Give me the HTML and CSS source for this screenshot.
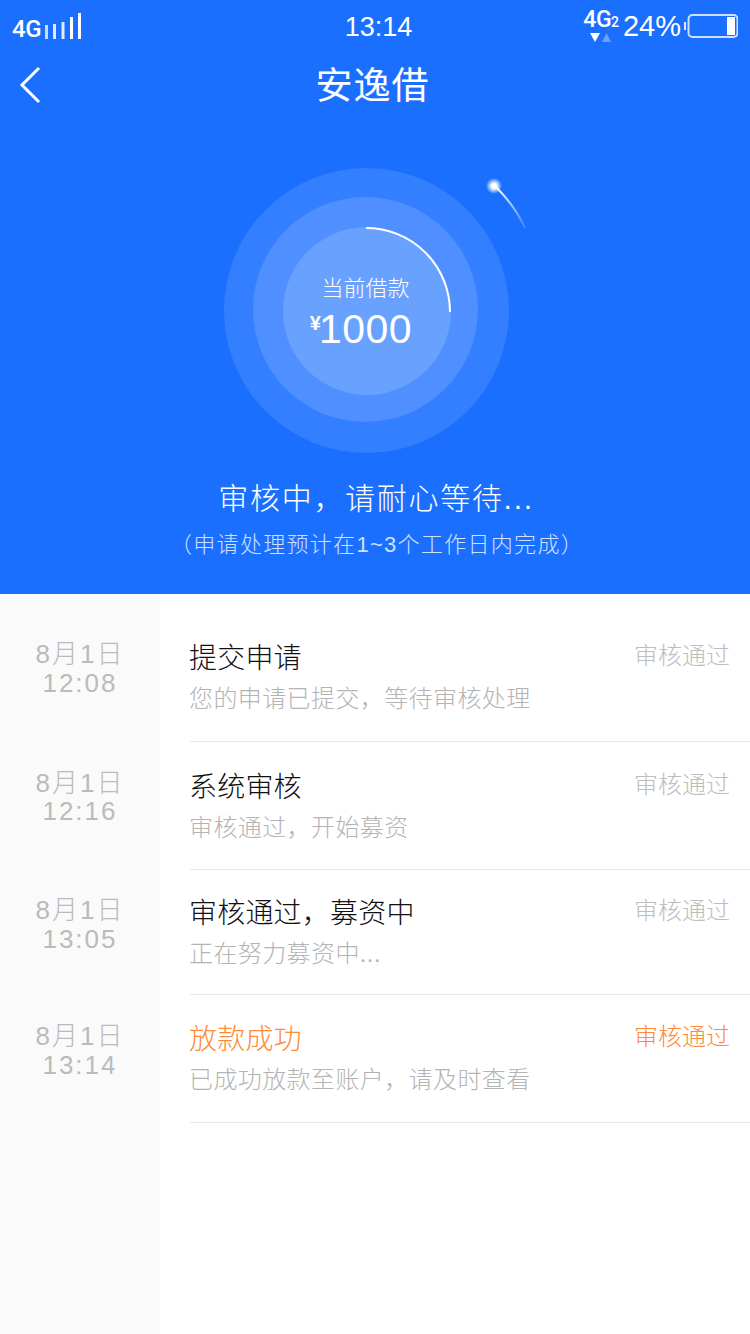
FILE: index.html
```html
<!DOCTYPE html>
<html lang="zh-CN">
<head>
    <meta charset="UTF-8">
    <meta name="viewport" content="width=device-width, initial-scale=1.0">
    <title>安逸借</title>
    <link rel="stylesheet" href="styles.css">
</head>
<body>
    <div class="header">
        <div class="status-bar">
            <div class="status-left">
                <span class="net-label">4G</span>
                <svg class="signal" width="38" height="26" viewBox="0 0 38 26">
                    <rect x="1" y="12" width="3" height="14" fill="#c9dcff"/>
                    <rect x="9" y="11" width="3" height="15" fill="#dfe9ff"/>
                    <rect x="17.5" y="9" width="3" height="17" fill="#dfe9ff"/>
                    <rect x="26" y="4" width="3" height="22" fill="#fff"/>
                    <rect x="34" y="0" width="3" height="26" fill="#fff"/>
                </svg>
            </div>
            <div class="status-time">13:14</div>
            <div class="status-right">
                <div class="sim">
                    <span class="sim-label">4G<small>2</small></span>
                    <svg width="22" height="9" viewBox="0 0 22 9">
                        <polygon points="0,0 10,0 5,9" fill="#fff"/>
                        <polygon points="12,9 21,9 16.5,0" fill="#6fa0ff"/>
                    </svg>
                </div>
                <span class="battery-text">24%</span>
                <svg class="battery" width="54" height="24" viewBox="0 0 54 24">
                    <rect x="0" y="8" width="2" height="8" fill="#dfe9ff"/>
                    <rect x="4.5" y="1" width="49" height="22" rx="4" fill="none" stroke="#cfe0ff" stroke-width="2"/>
                    <rect x="43" y="3" width="8" height="18" fill="#fff"/>
                </svg>
            </div>
        </div>

        <div class="nav">
            <svg class="back" width="24" height="40" viewBox="0 0 24 40">
                <polyline points="21,2 4,19 21,36" fill="none" stroke="#fff" stroke-width="3"/>
            </svg>
            <h1>安逸借</h1>
        </div>

        <div class="rings">
            <div class="ring ring-outer">
                <div class="ring ring-mid">
                    <div class="ring ring-inner">
                        <div class="amount-label">当前借款</div>
                        <div class="amount"><span class="yen">¥</span>1000</div>
                    </div>
                </div>
                <!-- progress arc and the little comet sit over the rings -->
                <svg class="arc" width="320" height="300" viewBox="0 0 320 300">
                    <defs>
                        <linearGradient id="tail" x1="0" y1="0" x2="1" y2="1">
                            <stop offset="0" stop-color="#fff"/>
                            <stop offset="1" stop-color="#fff" stop-opacity="0.15"/>
                        </linearGradient>
                        <radialGradient id="glow">
                            <stop offset="0.3" stop-color="#fff"/>
                            <stop offset="1" stop-color="#fff" stop-opacity="0"/>
                        </radialGradient>
                    </defs>
                    <path d="M146 68 A84 84 0 0 1 230 152" fill="none" stroke="#fff" stroke-width="2"/>
                    <path d="M276 27 Q295 46 305 68" fill="none" stroke="url(#tail)" stroke-width="2"/>
                    <circle cx="274" cy="26" r="8" fill="url(#glow)"/>
                </svg>
            </div>
        </div>

        <div class="state">审核中，请耐心等待...</div>
        <div class="state-note">（申请处理预计在1~3个工作日内完成）</div>
    </div>

    <div class="timeline">
        <div class="row row-1">
            <div class="row-time">8月1日<br>12:08</div>
            <div class="row-body">
                <div class="row-text">
                    <div class="row-title">提交申请</div>
                    <div class="row-desc">您的申请已提交，等待审核处理</div>
                </div>
                <div class="row-state">审核通过</div>
            </div>
        </div>
        <div class="row row-2">
            <div class="row-time">8月1日<br>12:16</div>
            <div class="row-body">
                <div class="row-text">
                    <div class="row-title">系统审核</div>
                    <div class="row-desc">审核通过，开始募资</div>
                </div>
                <div class="row-state">审核通过</div>
            </div>
        </div>
        <div class="row row-3">
            <div class="row-time">8月1日<br>13:05</div>
            <div class="row-body">
                <div class="row-text">
                    <div class="row-title">审核通过，募资中</div>
                    <div class="row-desc">正在努力募资中...</div>
                </div>
                <div class="row-state">审核通过</div>
            </div>
        </div>
        <div class="row row-4 done">
            <div class="row-time">8月1日<br>13:14</div>
            <div class="row-body">
                <div class="row-text">
                    <div class="row-title">放款成功</div>
                    <div class="row-desc">已成功放款至账户，请及时查看</div>
                </div>
                <div class="row-state">审核通过</div>
            </div>
        </div>
        <div class="rest"></div>
    </div>
</body>
</html>
```

FILE: styles.css
```css
* {
    box-sizing: border-box;
}

html, body {
    height: 100%;
}

body {
    margin: 0;
    height: 1334px;
    overflow: hidden;
    display: flex;
    flex-direction: column;
    font-family: "Liberation Sans", "Noto Sans CJK SC", sans-serif;
    background-color: #fff;
}

.header {
    height: 594px;
    flex: none;
    background-color: #1b6fff;
    color: #fff;
    text-align: center;
}

.status-bar {
    height: 52px;
    padding: 13px 12px 0 12px;
    display: flex;
    justify-content: space-between;
    align-items: flex-start;
}

.status-left {
    width: 180px;
    display: flex;
    align-items: flex-end;
    gap: 3px;
}

.net-label {
    width: 29px;
    font-family: Roboto, sans-serif;
    font-size: 24px;
    line-height: 26px;
    font-weight: 500;
    letter-spacing: -0.5px;
    text-align: left;
    position: relative;
    top: 3px;
}

.status-time {
    font-size: 27px;
    line-height: 30px;
    margin-left: 7px;
    margin-top: -1px;
}

.status-right {
    width: 180px;
    margin-top: -4px;
    display: flex;
    justify-content: flex-end;
    align-items: flex-start;
}

.sim {
    width: 38px;
    display: flex;
    flex-direction: column;
    align-items: center;
}

.sim-label {
    font-family: Roboto, sans-serif;
    font-size: 23px;
    line-height: 21px;
    font-weight: 500;
    letter-spacing: -0.5px;
}

.sim-label small {
    font-size: 14px;
}

.battery-text {
    font-size: 29px;
    line-height: 34px;
    margin: 0 3px 0 3px;
}

.battery {
    margin-top: 5px;
}

.nav {
    height: 64px;
    display: flex;
    align-items: center;
    justify-content: center;
    position: relative;
}

.nav h1 {
    margin: -2px 5px 0 0;
    font-size: 37px;
    font-weight: normal;
    letter-spacing: 1px;
}

.back {
    position: absolute;
    left: 18px;
    top: 14px;
}

.rings {
    padding: 52px 0 0 224px;
    display: flex;
}

.ring {
    border-radius: 50%;
    display: flex;
    flex-direction: column;
    align-items: center;
    justify-content: center;
}

.ring-outer {
    width: 285px;
    height: 285px;
    background-color: #337fff;
    position: relative;
}

.ring-mid {
    width: 225px;
    height: 225px;
    margin: -2px 0 0 -2px;
    background-color: #4f8fff;
}

.ring-inner {
    width: 168px;
    height: 168px;
    margin: 3px 0 0 3px;
    padding-top: 18px;
    background-color: #69a1ff;
}

.arc {
    position: absolute;
    left: -4px;
    top: -8px;
}

.amount-label {
    font-size: 22px;
    font-weight: 300;
    line-height: 30px;
    margin: -5px 3px 0 0;
}

.amount {
    font-size: 41px;
    line-height: 50px;
    letter-spacing: 0.5px;
    margin-left: -12px;
    position: relative;
}

.yen {
    font-size: 20px;
    font-weight: bold;
    position: relative;
    top: -13px;
    letter-spacing: -2px;
}

.state {
    margin-top: 26px;
    margin-left: 2px;
    font-size: 30px;
    font-weight: 300;
    line-height: 40px;
    letter-spacing: 1.7px;
}

.state-note {
    margin-top: 9px;
    margin-left: 4px;
    font-size: 22px;
    font-weight: 300;
    line-height: 34px;
    color: #cfe0ff;
    letter-spacing: 1.3px;
}

.timeline {
    flex: 1;
    display: flex;
    flex-direction: column;
    background: linear-gradient(to right, #fafafa 160px, #fff 160px);
}

.row {
    display: flex;
}

.row-1 { height: 148px; padding-top: 44px; }
.row-2 { height: 128px; padding-top: 26px; }
.row-3 { height: 125px; padding-top: 24px; }
.row-4 { height: 128px; padding-top: 25px; }

.row-time {
    width: 160px;
    flex: none;
    text-align: center;
    color: #bbb;
    font-size: 26px;
    font-weight: 300;
    line-height: 29px;
    letter-spacing: 2px;
    padding-top: 2px;
}

.row-2 .row-time { padding-top: 1px; line-height: 28px; }

.row-body {
    flex: 1;
    margin-left: 30px;
    margin-top: -1px;
    padding-right: 20px;
    display: flex;
    justify-content: space-between;
    align-items: flex-start;
    border-bottom: 1px solid #e8e8e8;
}

.row-1 .row-body { margin-top: 0; }

.row-text {
    margin-left: -1px;
    padding-top: 3px;
}

.row-title {
    font-size: 28px;
    font-weight: 300;
    line-height: 36px;
    letter-spacing: 0.2px;
    color: #111;
}

.row-desc {
    margin-top: 5px;
    font-size: 24px;
    font-weight: 300;
    line-height: 34px;
    color: #b4b4b4;
    letter-spacing: 0.4px;
}

.row-state {
    margin-top: 3px;
    font-size: 24px;
    font-weight: 300;
    line-height: 30px;
    color: #bdbdbd;
}

.done .row-title,
.done .row-state {
    color: #ff8a38;
}

.rest {
    flex: 1;
}
```
